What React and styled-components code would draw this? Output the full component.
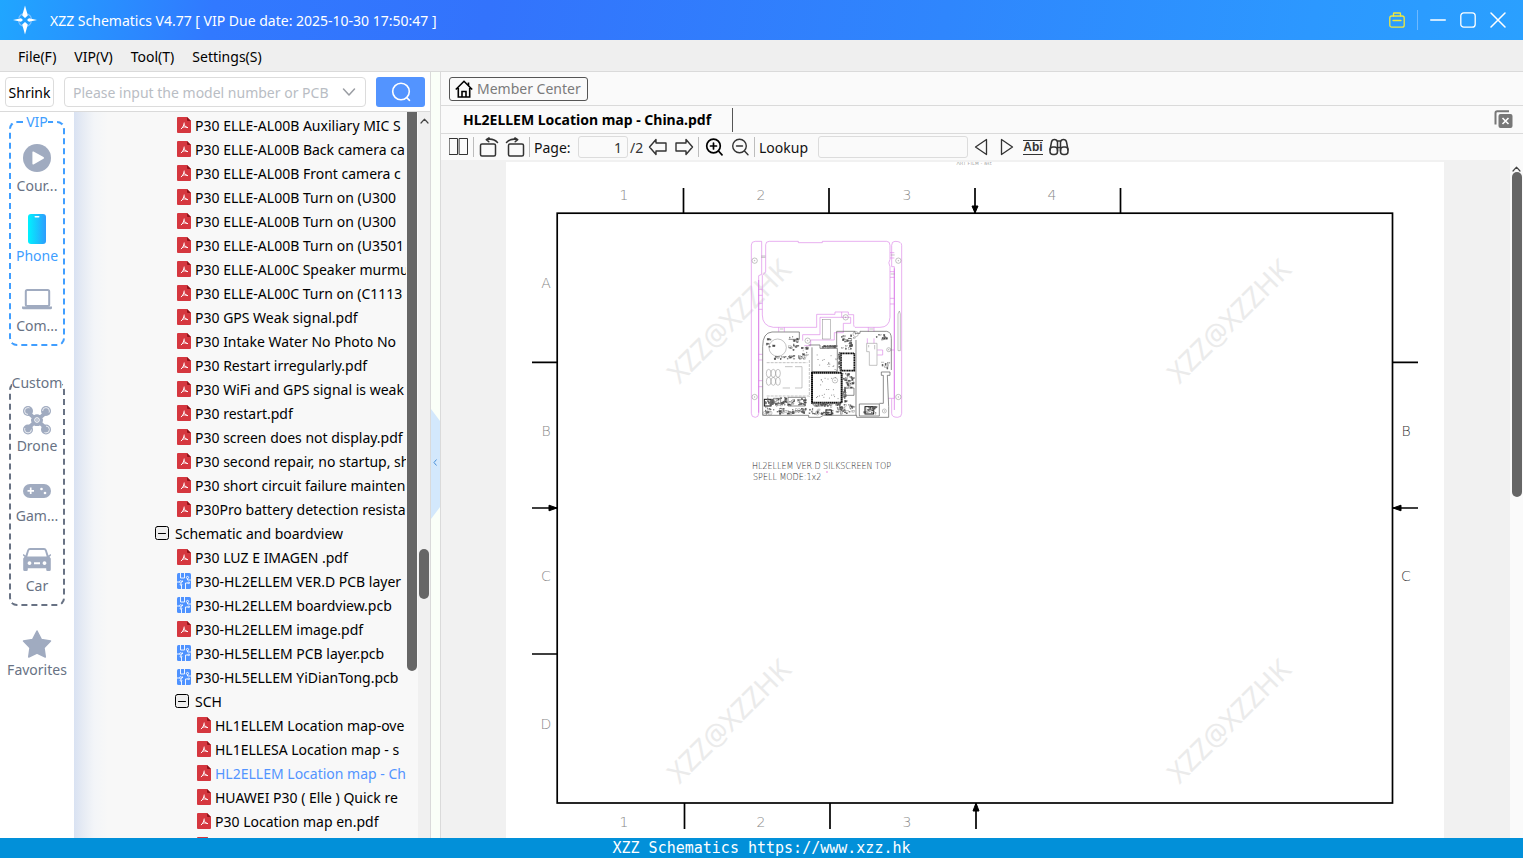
import React from "react";
import styled, { createGlobalStyle, css } from "styled-components";

const GlobalStyle = createGlobalStyle`
  *, *::before, *::after { box-sizing: border-box; }
  body {
    margin: 0;
    font-family: "Noto Sans", "Open Sans", sans-serif;
    font-size: 14px;
    line-height: 20px;
    color: #000;
    background: #f0f0f0;
  }
  button, input { font: inherit; color: inherit; }
  svg { display: block; }
`;

/* ---------- shell ---------- */

const Window = styled.div`
  display: flex;
  flex-direction: column;
  height: 100vh;
  overflow: hidden;
`;

const TitleBar = styled.header`
  display: flex;
  align-items: center;
  flex: none;
  height: 40px;
  padding: 0 10px 0 12px;
  color: #fff;
  background: linear-gradient(100deg, #20a6ff 0%, #3179ff 14%, #3373fc 32%, #2f86fd 62%, #2c98ff 86%, #2aa0ff 100%);
`;

const TitleText = styled.h1`
  flex: 1;
  margin: 0 0 0 12px;
  padding-top: 2px;
  font-size: 14px;
  font-weight: 400;
  white-space: nowrap;
`;

const WindowButton = styled.button`
  display: grid;
  place-items: center;
  width: 30px;
  height: 30px;
  padding: 0;
  border: 0;
  background: none;
  color: ${(p) => p.$color || "#fff"};
`;

const TitleDivider = styled.span`
  width: 1px;
  height: 20px;
  margin: 0 5px;
  background: #6fb9ff;
`;

const MenuBar = styled.nav`
  display: flex;
  align-items: center;
  flex: none;
  gap: 18px;
  height: 32px;
  padding: 2px 18px 0;
  background: #efefef;
  border-bottom: 1px solid #dadada;
`;

const MenuItem = styled.button`
  padding: 0;
  border: 0;
  background: none;
`;

const Workspace = styled.div`
  display: flex;
  flex: 1;
  min-height: 0;
`;

const StatusBar = styled.footer`
  flex: none;
  height: 20px;
  padding-top: 1px;
  color: #fff;
  background: #0290d9;
  font-family: "DejaVu Sans Mono", "Liberation Mono", monospace;
  font-size: 15px;
  line-height: 19px;
  text-align: center;
`;

/* ---------- left side ---------- */

const Sidebar = styled.aside`
  display: flex;
  flex-direction: column;
  flex: none;
  width: 431px;
  background: #fff;
  border-right: 1px solid #dadada;
`;

const SearchRow = styled.form`
  display: flex;
  align-items: center;
  flex: none;
  gap: 10px;
  height: 40px;
  padding: 0 5px;
  border-bottom: 1px solid #dadada;
`;

const ShrinkButton = styled.button`
  width: 49px;
  height: 30px;
  padding: 2px 0 0;
  border: 1px solid #dcdcdc;
  border-radius: 4px;
  background: #fff;
`;

const SearchBox = styled.div`
  display: flex;
  align-items: center;
  flex: 1;
  height: 30px;
  padding: 0 9px 0 8px;
  border: 1px solid #dcdcdc;
  border-radius: 4px;
  color: #9a9da3;
`;

const SearchInput = styled.input`
  flex: 1;
  min-width: 0;
  padding: 2px 0 0;
  border: 0;
  outline: 0;
  background: none;
  &::placeholder { color: #b9bdc4; opacity: 1; }
`;

const ChevronButton = styled.button`
  padding: 0;
  border: 0;
  background: none;
`;

const SearchButton = styled.button`
  display: grid;
  place-items: center;
  width: 49px;
  height: 30px;
  padding: 0;
  border: 0;
  border-radius: 3px;
  color: #fff;
  background: #5394ff;
`;

const SidebarBody = styled.div`
  display: flex;
  flex: 1;
  min-height: 0;
`;

const CategoryNav = styled.nav`
  display: flex;
  flex-direction: column;
  align-items: center;
  flex: none;
  gap: 22px;
  width: 74px;
  color: #687284;
`;

const CategoryGroup = styled.fieldset`
  display: flex;
  flex-direction: column;
  align-items: center;
  gap: ${(p) => (p.$active ? 16 : 18)}px;
  width: 56px;
  min-width: 0;
  margin: ${(p) => (p.$active ? 0 : 5)}px 0 0;
  padding: ${(p) => (p.$active ? 10 : 11)}px 0 8px;
  border: 2px dashed ${(p) => (p.$active ? "#409eff" : "#687284")};
  border-radius: 8px;
`;

const GroupLegend = styled.legend`
  margin: 0 auto;
  padding: 0;
  line-height: 20px;
  color: ${(p) => (p.$active ? "#409eff" : "#687284")};
`;

const CategoryButton = styled.button`
  display: flex;
  flex-direction: column;
  align-items: center;
  gap: ${(p) => (p.$roomy ? 2 : 0)}px;
  padding: 0;
  border: 0;
  background: none;
  color: ${(p) => (p.$active ? "#409eff" : "#687284")};
  svg { color: #a0abc0; }
`;

const Tree = styled.ul`
  flex: 1;
  min-width: 0;
  margin: 0;
  padding: 1px 0 0;
  overflow: hidden;
  list-style: none;
  background: linear-gradient(90deg, #d9e2f2 0, #e6ebf4 9px, #f3f5f8 20px, #f8f8f8 34px);
`;

const TreeRow = styled.li`
  display: flex;
  align-items: center;
  gap: ${(p) => (p.$folder ? 6 : 4)}px;
  height: 24px;
  padding-left: ${(p) => p.$indent}px;
  white-space: nowrap;
  color: ${(p) => (p.$selected ? "#5394ff" : "#000")};
  svg { flex: none; }
`;

const TreeName = styled.span`
  padding-top: 2px;
`;

const ScrollTrack = styled.div`
  display: flex;
  flex-direction: column;
  align-items: center;
  flex: none;
  width: ${(p) => p.$width}px;
  padding-top: ${(p) => p.$top || 0}px;
  background: ${(p) => p.$tone};
  color: #444;
`;

const ScrollThumb = styled.div`
  flex: none;
  width: 10px;
  height: ${(p) => p.$size};
  border-radius: ${(p) => (p.$flatTop ? "0 0 5px 5px" : "5px")};
  background: #666;
`;

const TrackSpacer = styled.div`
  flex: ${(p) => p.$share} 1 0;
`;

const Splitter = styled.div`
  display: flex;
  align-items: center;
  flex: none;
  width: 9px;
  background: #fafff8;
`;

const CollapseButton = styled.button`
  display: block;
  margin-top: 18px;
  padding: 0;
  border: 0;
  background: none;
`;

/* ---------- document side ---------- */

const Content = styled.main`
  display: flex;
  flex-direction: column;
  flex: 1;
  min-width: 0;
  border-left: 1px solid #dadada;
  background: #fafafa;
`;

const barRow = css`
  display: flex;
  align-items: center;
  flex: none;
`;

const CenterRow = styled.div`
  ${barRow}
  height: 34px;
  padding-left: 8px;
  border-bottom: 1px solid #dadada;
`;

const MemberButton = styled.button`
  display: flex;
  align-items: center;
  gap: 4px;
  height: 24px;
  padding: 0 6px 0 5px;
  border: 1px solid #555;
  border-radius: 3px;
  background: #fafafa;
  color: #7b7b7b;
  svg { color: #000; }
`;

const TabRow = styled.div`
  ${barRow}
  justify-content: space-between;
  height: 28px;
  padding-right: 10px;
  border-bottom: 1px solid #dadada;
`;

const Tab = styled.button`
  height: 24px;
  padding: 0 21px 0 22px;
  border: 0;
  border-right: 1px solid #555;
  background: none;
  font-weight: 700;
  white-space: nowrap;
`;

const CloseTabs = styled.button`
  padding: 0 0 2px;
  border: 0;
  background: none;
  color: #777;
`;

const Toolbar = styled.div`
  ${barRow}
  height: 26px;
  padding-left: 5px;
  color: #333;
`;

const ToolButton = styled.button`
  display: grid;
  place-items: center;
  flex: none;
  width: 26px;
  height: 24px;
  padding: 0;
  border: 0;
  background: none;
  color: ${(p) => (p.$strong ? "#000" : "#333")};
`;

const ToolDivider = styled.span`
  flex: none;
  width: 1px;
  height: 20px;
  margin: 0 2px 0 1px;
  background: #bdbdbd;
`;

const ToolLabel = styled.label`
  flex: none;
  width: ${(p) => p.$width}px;
  margin-left: 2px;
  padding-top: 2px;
  color: #111;
`;

const ToolInput = styled.input`
  flex: none;
  width: ${(p) => p.$width}px;
  height: 22px;
  padding: 0 5px;
  border: 1px solid #dcdcdc;
  border-radius: 3px;
  outline: 0;
  background: #fafafa;
  text-align: right;
`;

const PageTotal = styled.span`
  flex: none;
  width: 15px;
  margin-left: 2px;
  padding-top: 2px;
`;

const MatchWord = styled.span`
  border: solid #333;
  border-width: 1px 0;
  font-family: "Liberation Sans", sans-serif;
  font-size: 12px;
  font-weight: 700;
  line-height: 13px;
`;

const Viewer = styled.div`
  display: flex;
  flex: 1;
  min-height: 0;
  background: #f1f1f1;
`;

const PageArea = styled.div`
  display: flex;
  justify-content: center;
  flex: 1;
  min-width: 0;
  padding: 2px 2px 0 0;
  overflow: hidden;
`;

const Sheet = styled.div`
  flex: none;
  background: #fff;
`;

/* ---------- icons ---------- */

const Stroke = ({ w = 20, h = w, vb = `0 0 ${w} ${h}`, sw = 1.5, children }) => (
  <svg width={w} height={h} viewBox={vb} fill="none" stroke="currentColor" strokeWidth={sw} strokeLinejoin="round" strokeLinecap="round" aria-hidden="true">
    {children}
  </svg>
);

const LogoIcon = () => (
  <svg width="26" height="30" viewBox="0 0 26 30" aria-hidden="true">
    <circle cx="13" cy="15" r="6.5" fill="none" stroke="#7cc0ff" strokeWidth="1.2" strokeDasharray="7 3.2" strokeDashoffset="-1.5" />
    <path d="M13 .5 15.8 10.5 13 13 10.2 10.5ZM13 29.500 15.8 19.5 13 17 10.2 19.5ZM1 15 9 13.2 11 15 9 16.8ZM25 15 17 13.2 15 15 17 16.8Z" fill="#fff" />
  </svg>
);

const ChevronUp = () => (
  <Stroke w={9} h={6} sw={1.2}><path d="M1 5 4.5 1.2 8 5" /></Stroke>
);

const PdfIcon = () => (
  <svg width="14" height="16" viewBox="0 0 14 16" aria-hidden="true">
    <path d="M1 0H10L14 4V15a1 1 0 0 1-1 1H1a1 1 0 0 1-1-1V1a1 1 0 0 1 1-1Z" fill="#d5373f" />
    <path d="M10 0 14 4H11a1 1 0 0 1-1-1Z" fill="#8f1219" />
    <path d="M7.200 6C7 8.500 6 10 4.300 11.800M7.100 7.500C7.800 9.200 9 10.200 10.600 10.600M5.400 10.400C7 9.700 8.200 9.700 10.400 10.500" fill="none" stroke="#fff" strokeWidth="1" strokeLinecap="round" />
  </svg>
);

const PcbIcon = () => (
  <svg width="14" height="16" viewBox="0 0 14 16" aria-hidden="true">
    <rect width="14" height="16" rx="1.5" fill="#4e92ff" />
    <g fill="none" stroke="#fff" strokeWidth=".9">
      <path d="M3.500 0V5H7.500M7.500 0V5M14 7H10.500V5.500M0 9H2.500M5.500 9V7.500M8.500 16V10H11M4.500 16V12" />
      <circle cx="10.500" cy="4.500" r="1.100" /><circle cx="3.700" cy="8.800" r="1.100" /><circle cx="4" cy="11.500" r=".8" /><circle cx="11.800" cy="9.800" r=".8" />
    </g>
  </svg>
);

const MinusBox = () => (
  <Stroke w={14} sw={1}><rect x=".5" y=".5" width="13" height="13" rx="2" fill="#eee" /><path d="M3.5 7.500H10.5" /></Stroke>
);

const CourseIcon = () => (
  <svg width="32" height="32" viewBox="0 0 32 32"><circle cx="16" cy="16" r="14" fill="currentColor" /><path d="M11.4 10.2Q11.4 9 12.5 9.6L22.5 15Q23.8 16 22.5 16.8L12.5 22.4Q11.4 22.8 11.4 21.8Z" fill="#fff" /></svg>
);

const PhoneIcon = () => (
  <svg width="32" height="32" viewBox="0 0 32 32">
    <defs><linearGradient id="phoneFill"><stop offset="0" stopColor="#00f2fe" /><stop offset="1" stopColor="#2e9cfd" /></linearGradient></defs>
    <rect x="7" y="2" width="18" height="30" rx="3" fill="url(#phoneFill)" /><rect x="13.5" y="4" width="5" height="1.6" rx=".8" fill="#fff" />
  </svg>
);

const ComputerIcon = () => (
  <svg width="32" height="32" viewBox="0 0 32 32"><rect x="4.8" y="8" width="23.4" height="16" rx="1.5" fill="none" stroke="currentColor" strokeWidth="2" /><path d="M1 24.5H31V26Q31 27.2 29.6 27.2H2.4Q1 27.2 1 26Z" fill="currentColor" /></svg>
);

const DroneIcon = () => (
  <svg width="32" height="32" viewBox="0 0 32 32">
    <path d="M7 7 13 12Q16 10 19 12L25 7 26.5 9 20.5 14Q22 16 20.5 18.5L26.5 24 25 26 19 20.5Q16 22 13 20.5L7 26 5.5 24 11.5 18.5Q10 16 11.5 14L5.500 9Z" fill="currentColor" stroke="currentColor" strokeWidth="1.5" />
    {[[7, 7], [25, 7], [7, 25.5], [25, 25.5]].map(([x, y]) => (
      <g key={`${x}-${y}`}><circle cx={x} cy={y} r="5" fill="currentColor" /><circle cx={x} cy={y} r="3.4" fill="none" stroke="#fff" strokeWidth=".8" strokeDasharray="12 9.400" transform={`rotate(${x < 16 ? (y < 16 ? 90 : 0) : (y < 16 ? 180 : 270)} ${x} ${y})`} /></g>
    ))}
    <circle cx="16" cy="16" r="2.300" fill="none" stroke="#fff" strokeWidth="1" /><circle cx="16" cy="16" r=".7" fill="#fff" />
  </svg>
);

const GameIcon = () => (
  <svg width="32" height="32" viewBox="0 0 32 32"><rect x="2" y="10" width="28" height="14" rx="7" fill="currentColor" /><path d="M6.500 16.800H13M9.700 13.500V20" stroke="#fff" strokeWidth="1.700" /><circle cx="20.500" cy="15" r="1.300" fill="#fff" /><circle cx="24" cy="19" r="1.300" fill="#fff" /></svg>
);

const CarIcon = () => (
  <svg width="32" height="32" viewBox="0 0 32 32">
    <path fillRule="evenodd" fill="currentColor" d="M9 4H23Q25 4 25.700 6L27.500 11.500 29.500 10Q30.500 10.500 29.800 11.700L28.500 12.800 29.800 14.500V25.500Q29.800 27 28.400 27H26.500Q25.200 27 25.200 25.500V24.300H6.800V25.500Q6.800 27 5.500 27H3.600Q2.200 27 2.200 25.500V14.500L3.500 12.800 2.200 11.700Q1.500 10.500 2.500 10L4.500 11.500 6.300 6Q7 4 9 4ZM9 6Q8.200 6 8 6.800L6.300 12.500H25.700L24 6.800Q23.800 6 23 6ZM8.500 17.200a1.900 1.900 0 1 0 .01 0ZM23.500 17.200a1.900 1.900 0 1 0 .01 0ZM13 18.200V20.200H19V18.200Z" />
  </svg>
);

const StarIcon = () => (
  <svg width="32" height="32" viewBox="0 0 32 32"><path d="M16 3 20.400 11.500 29.500 13 23 19.800 24.300 29 16 25 7.700 29 9 19.800 2.500 13 11.600 11.500Z" fill="currentColor" stroke="currentColor" strokeWidth="1.500" strokeLinejoin="round" /></svg>
);

const HomeIcon = () => (
  <Stroke w={18} sw={1.6}><path d="M.8 9.500 9 1.300 17.200 9.500M3.300 8V17H14.700V8M7 17V11.500H11V17M13.500 2.500V5.500" strokeLinecap="butt" strokeLinejoin="miter" /></Stroke>
);

const RotateIcon = ({ right }) => (
  <Stroke w={20} sw={1.500}>
    <g transform={right ? "matrix(-1 0 0 1 20 0)" : undefined}>
      <rect x="1.500" y="7" width="15" height="12" rx="1.500" />
      <path d="M7.500 2.500Q14.500 1 18.500 5.500M10 .8 7.300 2.600 9.800 4.800" />
    </g>
  </Stroke>
);

const ArrowIcon = ({ right }) => (
  <Stroke w={20} sw={1.400}><path transform={right ? "matrix(-1 0 0 1 20 0)" : undefined} d="M1.500 10 8 2.500V6H18V14H8V17.500Z" /></Stroke>
);

const ZoomIcon = ({ plus }) => (
  <Stroke w={18} sw={plus ? 1.700 : 1.400}><circle cx="8.500" cy="8" r="6.800" /><path d="M13.500 13 17 16.800M5.500 8H11.500" />{plus && <path d="M8.500 5V11" />}</Stroke>
);

const BinocularsIcon = () => (
  <Stroke w={20} h={18} sw={1.500}>
    <path d="M1 12 2.500 4Q3 1.500 5.500 1.500T8.500 4V13M19 12 17.500 4Q17 1.500 14.500 1.500T11.500 4V13M8.500 3H11.500M8.500 9.500H11.500" />
    <rect x="1" y="9" width="7.500" height="7.500" rx="3" /><rect x="11.500" y="9" width="7.500" height="7.500" rx="3" />
  </Stroke>
);

const CloseAllIcon = () => (
  <svg width="19" height="18" viewBox="0 0 19 18"><path d="M1.500 14.500V3Q1.500 1.300 3.200 1.300H15" fill="none" stroke="currentColor" strokeWidth="2" /><rect x="4.500" y="4" width="14" height="14" rx="2" fill="currentColor" /><path d="M8.500 8 14.500 14M14.500 8 8.500 14" stroke="#fff" strokeWidth="1.600" /></svg>
);

/* ---------- board drawing ---------- */

const makeRandom = (seed) => () => {
  seed = (seed * 16807) % 2147483647;
  return seed / 2147483647;
};

const clusters = [
  [74, 502, 46, 34, 34], [120, 503, 80, 26, 40], [72, 534, 130, 22, 50], [205, 536, 80, 20, 24],
  [285, 522, 60, 32, 36], [370, 526, 44, 28, 22], [100, 376, 100, 14, 26], [146, 314, 30, 50, 18],
  [302, 314, 44, 46, 26], [308, 428, 36, 50, 30], [308, 476, 14, 44, 18], [216, 518, 90, 14, 36],
  [242, 346, 50, 8, 26], [424, 394, 26, 24, 10], [405, 312, 42, 22, 10], [74, 316, 30, 40, 8],
  [182, 350, 24, 40, 10], [296, 366, 8, 56, 16],
];

const rand = makeRandom(4177);
const parts = clusters.flatMap(([x, y, w, h, n]) =>
  Array.from({ length: n }, () => ({
    x: x + rand() * (w - 6),
    y: y + rand() * (h - 5),
    w: 2 + rand() * 6,
    h: 2 + rand() * 4,
    solid: rand() > 0.6,
  }))
);
const specks = Array.from({ length: 18 }, () => [224 + rand() * 70, 372 + rand() * 48])
  .concat(Array.from({ length: 22 }, () => [226 + rand() * 70, 440 + rand() * 70]));

const Hole = ({ x, y, r = 8 }) => (
  <g><circle cx={x} cy={y} r={r} /><circle cx={x} cy={y} r="1" /></g>
);

const Board = () => (
  <g transform="translate(740 230) scale(.33333)" fill="none">
    <g stroke="#dd8ae8" strokeWidth="2">
      <path d="M34 45Q34 34 46 34H65V133L56 137V550Q56 562 46 562Q34 562 34 550Z" />
      <path d="M77 44Q77 34 88 34H175V38H247V34H440Q450 34 450 46V88Q443 98 450 110V262Q448 292 420 292H345Q341 290 341 284V254H325V246H285V253H230V292H100Q67 288 67 255V136L77 126Z" />
      <path d="M188 332V314H240V262H332V280H310V308H283V330H212V347H193" />
      <path d="M455 46Q455 34 465 34Q485 34 485 46V550Q485 562 473 562Q455 562 455 550V505H463V110H455Z" />
      <path d="M56 178H67M56 196H67M56 220H67M56 238H67M56 373H67M56 390H67M56 452H67M56 470H67M450 68H463M450 84H463M450 125H463M450 142H463M450 205H463M450 222H463M412 360H428V375H412M452 360H463M445 505H455M116 292V305M133 292V305M385 292V305M402 292V305M305 246V262M382 325V340M402 325V340" />
    </g>
    <path d="M56 150V548M463 115V540" stroke="#d668e6" strokeWidth="2" />
    <g stroke="#888" strokeWidth="1.500">
      <Hole x={44} y={92} /><Hole x={475} y={92} /><Hole x={44} y={501} /><Hole x={475} y={501} />
      <Hole x={317} y={262} /><Hole x={203} y={332} /><Hole x={285} y={451} /><Hole x={347} y={312} /><Hole x={433} y={543} r={6} />
      <Hole x={336} y={457} r={6} /><Hole x={232} y={549} r={6} /><Hole x={75} y={550} r={6} /><Hole x={90} y={549} r={6} /><Hole x={446} y={359} r={6} />
      <rect x="248" y="268" width="24" height="59" />
      <path d="M474 362V252L478 243 481 252V362ZM64 78H76M64 82H76M452 75H464M452 132H464M120 297H130M388 297H400" />
      <circle cx="113" cy="353" r="26" />
      {[86, 100, 114].map((x) => [430, 454].map((y) => <ellipse key={`${x}-${y}`} cx={x} cy={y} rx="7" ry="12" />))}
      <path d="M135 410H158M165 410H186V474H165M150 474H128" />
      <path d="M380 340H411V406H388V365H380ZM404 345V358M386 345V352" />
      <path d="M80 398H202M80 498H208M208 390V500" strokeDasharray="9 3" />
    </g>
    <g stroke="#555" strokeWidth="2">
      <path d="M68 350Q68 308 96 306H178V328H146M68 350V556H206V562H240L250 556H350V562H446V530L442 436H450V426H424V436H430V520H418" />
      <path d="M290 350V304H345V310H360V304H440Q454 306 454 326V420M348 330V556M206 345H240V355H292V425H216V352" />
      <path d="M358 522H418V558H358ZM144 502H196V528H144ZM100 505H122V520H100ZM316 474H342V496H316Z" />
    </g>
    <g stroke="#111">
      <rect x="216" y="428" width="89" height="90" strokeWidth="6" strokeDasharray="5 1" />
      <rect x="303" y="370" width="40" height="52" strokeWidth="5" strokeDasharray="4 1" />
      <rect x="73" y="508" width="20" height="20" strokeWidth="3" />
      <rect x="258" y="540" width="16" height="14" strokeWidth="3" />
      <rect x="375" y="530" width="26" height="22" strokeWidth="3" />
    </g>
    {parts.map((p, i) => (
      <rect key={i} x={p.x} y={p.y} width={p.w} height={p.h} fill={p.solid ? "#444" : "none"} stroke="#666" strokeWidth="1" />
    ))}
    {specks.map(([x, y], i) => <rect key={i} x={x} y={y} width="3" height="2" fill="#666" />)}
    <path d="M258 726H264" stroke="#f08ae0" strokeWidth="3" />
  </g>
);

const CadText = styled.text`
  font-family: "DejaVu Sans", sans-serif;
  font-weight: 200;
  font-size: ${(p) => p.$size || 14}px;
  fill: ${(p) => p.$tone || "#888"};
  text-anchor: ${(p) => p.$anchor || "middle"};
`;

const Watermark = styled.text`
  font-family: "Noto Sans", sans-serif;
  font-size: 28px;
  fill: #ebebeb;
  text-anchor: middle;
`;

const marks = [
  ["1", 624, 200], ["2", 761, 200], ["3", 907, 200], ["4", 1052, 200],
  ["1", 624, 827], ["2", 761, 827], ["3", 907, 827],
  ["A", 546, 288], ["B", 546, 436], ["C", 546, 581], ["D", 546, 729],
];

const Drawing = () => (
  <svg width="938" height="676" viewBox="506 162 938 676" role="img" aria-label="HL2ELLEM location map">
    <CadText x="974" y="165" $size={5} $tone="#555">ART FILM - ast</CadText>
    {[[729, 321], [1229, 321], [729, 721], [1229, 721]].map(([x, y]) => (
      <Watermark key={`${x}-${y}`} transform={`translate(${x} ${y}) rotate(-45)`} y="10">XZZ@XZZHK</Watermark>
    ))}
    <Board />
    <g fill="none" stroke="#000" strokeWidth="1.700">
      <rect x="557.200" y="213.200" width="835.300" height="589.800" />
      <path d="M683.500 188V213M829 188V213M975 188V213M1120.500 188V213M684.500 803V829M830 803V829M976 803V829" />
      <path d="M532 362.300H557M532 508H557M532 654H557M1393 362.300H1418M1393 508H1418" />
    </g>
    <path d="M975 213 972 206H978ZM976 803 973 811H979ZM557 508 549 505.200V510.800ZM1393 508 1401 505.200V510.800Z" stroke="#000" />
    {marks.map(([t, x, y]) => <CadText key={`${t}-${x}-${y}`} x={x} y={y}>{t}</CadText>)}
    <CadText x="1406" y="436" $tone="#333">B</CadText>
    <CadText x="1406" y="581" $tone="#333">C</CadText>
    <CadText x="752" y="469" $size={8} $anchor="start" $tone="#222">HL2ELLEM VER.D SILKSCREEN TOP</CadText>
    <CadText x="753" y="480" $size={8} $anchor="start" $tone="#222">SPELL MODE:1x2</CadText>
  </svg>
);

/* ---------- data ---------- */

const tree = [
  ["pdf", 103, "P30 ELLE-AL00B Auxiliary MIC S"],
  ["pdf", 103, "P30 ELLE-AL00B Back camera ca"],
  ["pdf", 103, "P30 ELLE-AL00B Front camera c"],
  ["pdf", 103, "P30 ELLE-AL00B Turn on (U300"],
  ["pdf", 103, "P30 ELLE-AL00B Turn on (U300"],
  ["pdf", 103, "P30 ELLE-AL00B Turn on (U3501"],
  ["pdf", 103, "P30 ELLE-AL00C Speaker murmu"],
  ["pdf", 103, "P30 ELLE-AL00C Turn on (C1113"],
  ["pdf", 103, "P30 GPS Weak signal.pdf"],
  ["pdf", 103, "P30 Intake Water No Photo No"],
  ["pdf", 103, "P30 Restart irregularly.pdf"],
  ["pdf", 103, "P30 WiFi and GPS signal is weak"],
  ["pdf", 103, "P30 restart.pdf"],
  ["pdf", 103, "P30 screen does not display.pdf"],
  ["pdf", 103, "P30 second repair, no startup, sh"],
  ["pdf", 103, "P30 short circuit failure mainten"],
  ["pdf", 103, "P30Pro battery detection resista"],
  ["folder", 81, "Schematic and boardview"],
  ["pdf", 103, "P30 LUZ E IMAGEN .pdf"],
  ["pcb", 103, "P30-HL2ELLEM VER.D PCB layer"],
  ["pcb", 103, "P30-HL2ELLEM boardview.pcb"],
  ["pdf", 103, "P30-HL2ELLEM image.pdf"],
  ["pcb", 103, "P30-HL5ELLEM PCB layer.pcb"],
  ["pcb", 103, "P30-HL5ELLEM YiDianTong.pcb"],
  ["folder", 101, "SCH"],
  ["pdf", 123, "HL1ELLEM Location map-ove"],
  ["pdf", 123, "HL1ELLESA Location map - s"],
  ["pdf", 123, "HL2ELLEM Location map - Ch", true],
  ["pdf", 123, "HUAWEI P30 ( Elle ) Quick re"],
  ["pdf", 123, "P30 Location map en.pdf"],
  ["pdf", 123, ""],
];

const treeIcons = { pdf: PdfIcon, pcb: PcbIcon, folder: MinusBox };

const groups = [
  { name: "VIP", active: true, items: [["Cour...", CourseIcon], ["Phone", PhoneIcon, true], ["Com...", ComputerIcon]] },
  { name: "Custom", items: [["Drone", DroneIcon], ["Gam...", GameIcon], ["Car", CarIcon]] },
];

const Category = ({ label, Icon, active, roomy }) => (
  <CategoryButton type="button" $active={active} $roomy={roomy}><Icon />{label}</CategoryButton>
);

/* ---------- app ---------- */

export default function App() {
  return (
    <Window>
      <GlobalStyle />
      <TitleBar>
        <LogoIcon />
        <TitleText>XZZ Schematics V4.77 [ VIP Due date: 2025-10-30 17:50:47 ]</TitleText>
        <WindowButton type="button" aria-label="Toolbox" $color="#f0e83c">
          <Stroke w={16} sw={1.300}><rect x=".8" y="4" width="14.400" height="11.200" rx="2" /><path d="M4.500 4V1.500Q4.500 1 5 1H11Q11.500 1 11.500 1.500V4M4 8.500H12" /></Stroke>
        </WindowButton>
        <TitleDivider />
        <WindowButton type="button" aria-label="Minimize"><Stroke w={16} sw={1.600}><path d="M.8 8H15.200" /></Stroke></WindowButton>
        <WindowButton type="button" aria-label="Maximize"><Stroke w={16} sw={1.300}><rect x=".8" y=".8" width="14.400" height="14.400" rx="3" /></Stroke></WindowButton>
        <WindowButton type="button" aria-label="Close"><Stroke w={16} sw={1.500}><path d="M1 1 15 15M15 1 1 15" /></Stroke></WindowButton>
      </TitleBar>
      <MenuBar aria-label="Main menu">
        {["File(F)", "VIP(V)", "Tool(T)", "Settings(S)"].map((m) => <MenuItem type="button" key={m}>{m}</MenuItem>)}
      </MenuBar>
      <Workspace>
        <Sidebar>
          <SearchRow onSubmit={(e) => e.preventDefault()}>
            <ShrinkButton type="button">Shrink</ShrinkButton>
            <SearchBox>
              <SearchInput aria-label="Model number or PCB" placeholder="Please input the model number or PCB" />
              <ChevronButton type="button" aria-label="Show history"><Stroke w={14} h={10} sw={1.500}><path d="M1.500 2 7 8 12.500 2" /></Stroke></ChevronButton>
            </SearchBox>
            <SearchButton type="submit" aria-label="Search"><Stroke w={20} sw={1.600}><circle cx="10" cy="9.500" r="8.300" /><path d="M15.700 15.700 18.500 18.300" /></Stroke></SearchButton>
          </SearchRow>
          <SidebarBody>
            <CategoryNav aria-label="Categories">
              {groups.map((g) => (
                <CategoryGroup key={g.name} $active={g.active}>
                  <GroupLegend $active={g.active}>{g.name}</GroupLegend>
                  {g.items.map(([label, Icon, active]) => <Category key={label} label={label} Icon={Icon} active={active} roomy={g.active} />)}
                </CategoryGroup>
              ))}
              <Category label="Favorites" Icon={StarIcon} />
            </CategoryNav>
            <Tree>
              {tree.map(([kind, indent, name, selected], i) => {
                const Icon = treeIcons[kind];
                return (
                  <TreeRow key={i} $indent={indent} $folder={kind === "folder"} $selected={selected}>
                    <Icon /><TreeName>{name}</TreeName>
                  </TreeRow>
                );
              })}
            </Tree>
            <ScrollTrack $width={12} $tone="#f8f8f8"><ScrollThumb $size="77%" $flatTop /></ScrollTrack>
            <ScrollTrack $width={12} $top={6} $tone="#f0f0f0">
              <ChevronUp />
              <TrackSpacer $share={16} />
              <ScrollThumb $size="50px" />
              <TrackSpacer $share={9} />
            </ScrollTrack>
          </SidebarBody>
        </Sidebar>
        <Splitter>
          <CollapseButton type="button" aria-label="Collapse panel">
            <svg width="9" height="110" viewBox="0 0 9 110"><path d="M0 0 9 12V98L0 110Z" fill="#d3e8fc" /><path d="M5.500 50.500 3 53.500 5.500 56.500" fill="none" stroke="#4a90d9" /></svg>
          </CollapseButton>
        </Splitter>
        <Content>
          <CenterRow>
            <MemberButton type="button"><HomeIcon />Member Center</MemberButton>
          </CenterRow>
          <TabRow>
            <Tab type="button">HL2ELLEM Location map - China.pdf</Tab>
            <CloseTabs type="button" aria-label="Close all tabs"><CloseAllIcon /></CloseTabs>
          </TabRow>
          <Toolbar>
            <ToolButton type="button" aria-label="Two pages"><Stroke w={20} h={18} sw={1}><path d="M.5 .5H8.500V16.500H.5ZM10.500 .5H18.500V16.500H10.500Z" strokeLinejoin="miter" /></Stroke></ToolButton>
            <ToolDivider />
            <ToolButton type="button" aria-label="Rotate left"><RotateIcon /></ToolButton>
            <ToolButton type="button" aria-label="Rotate right"><RotateIcon right /></ToolButton>
            <ToolDivider />
            <ToolLabel htmlFor="page" $width={44}>Page:</ToolLabel>
            <ToolInput id="page" $width={50} defaultValue="1" />
            <PageTotal>/2</PageTotal>
            <ToolButton type="button" aria-label="Previous page"><ArrowIcon /></ToolButton>
            <ToolButton type="button" aria-label="Next page"><ArrowIcon right /></ToolButton>
            <ToolDivider />
            <ToolButton type="button" aria-label="Zoom in" $strong><ZoomIcon plus /></ToolButton>
            <ToolButton type="button" aria-label="Zoom out"><ZoomIcon /></ToolButton>
            <ToolDivider />
            <ToolLabel htmlFor="lookup" $width={59}>Lookup</ToolLabel>
            <ToolInput id="lookup" $width={150} />
            <ToolButton type="button" aria-label="Find previous"><Stroke w={14} h={18} sw={1.300}><path d="M12.500 1.500V16.500L1.500 9Z" /></Stroke></ToolButton>
            <ToolButton type="button" aria-label="Find next"><Stroke w={14} h={18} sw={1.300}><path d="M1.500 1.500V16.500L12.500 9Z" /></Stroke></ToolButton>
            <ToolButton type="button"><MatchWord>Abi</MatchWord></ToolButton>
            <ToolButton type="button" aria-label="Find in document"><BinocularsIcon /></ToolButton>
          </Toolbar>
          <Viewer>
            <PageArea><Sheet><Drawing /></Sheet></PageArea>
            <ScrollTrack $width={13} $top={6} $tone="#fafafa">
              <ChevronUp />
              <ScrollThumb $size="325px" />
            </ScrollTrack>
          </Viewer>
        </Content>
      </Workspace>
      <StatusBar>XZZ Schematics https://www.xzz.hk</StatusBar>
    </Window>
  );
}
